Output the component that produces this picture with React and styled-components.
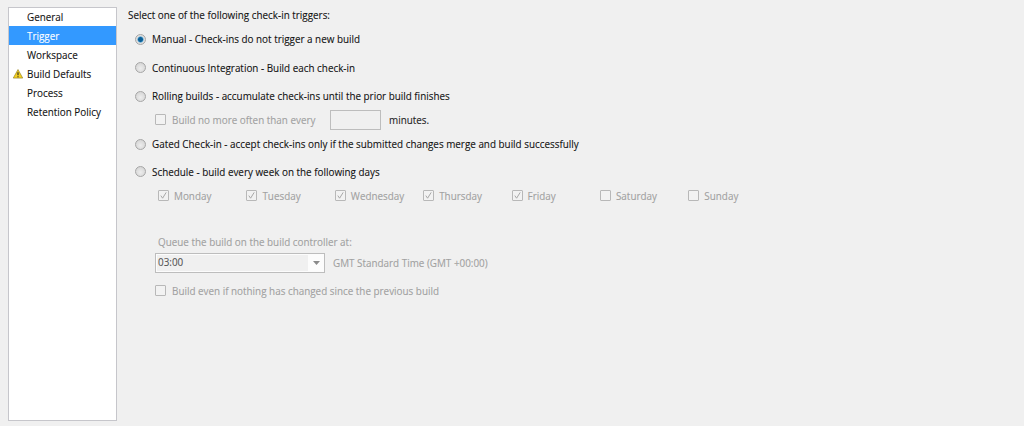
import React from "react";
import styled, { createGlobalStyle } from "styled-components";

const Global = createGlobalStyle`
  html, body { margin: 0; padding: 0; background: #f0f0f0; }
  body { font-family: "Open Sans", "Noto Sans", sans-serif; font-size: 9.9px; color: #111; -webkit-text-stroke: 0.1px currentColor; }
`;
const Page = styled.div`
  width: 1024px; height: 426px; display: flex; box-sizing: border-box;
  padding: 7px 0 5px 8px; overflow: hidden;
`;
const Sidebar = styled.nav`
  width: 109px; box-sizing: border-box; background: #fff;
  border: 1px solid #c6c6cb; flex: none;
`;
const NavRow = styled.div`
  height: 19px; display: flex; align-items: center; padding-left: 18px; position: relative;
  background: ${p => (p.$active ? "#3399ff" : "transparent")};
  color: ${p => (p.$active ? "#fff" : "#111")};
  &:first-child { height: 18px; }
`;
const WarnIcon = styled.svg`
  position: absolute; left: 4px; top: 5px; width: 10px; height: 10px;
`;
const Main = styled.main`
  flex: 1; padding-left: 11px; display: flex; flex-direction: column;
`;
const Heading = styled.div`height: 16px; line-height: 16px; margin-bottom: 8px;`;
const RadioRow = styled.label`
  display: flex; align-items: center; gap: 6px; height: 16px; padding-left: 7px;
  margin-bottom: ${p => p.$mb ?? 12.6}px;
`;
const RadioDot = styled.span`
  width: 11px; height: 11px; border-radius: 50%; box-sizing: border-box; flex: none;
  border: 1px solid #a6a6a6;
  background: ${p => p.$on
    ? "radial-gradient(circle, #0d5f96 0 2px, #5fabd8 2.8px, #dcdcdc 3.4px, #ececec 100%)"
    : "radial-gradient(circle at 50% 60%, #ededed, #cfcfcf)"};
`;
const Check = styled.span`
  width: 11px; height: 11px; box-sizing: border-box; flex: none;
  border: 1px solid #b8b8b8; border-radius: 1px; background: #f2f2f2;
  display: flex; align-items: center; justify-content: center;
`;
const SubRow = styled.div`
  display: flex; align-items: center; height: 20px; padding-left: 27px;
  margin-bottom: ${p => p.$mb ?? 6}px;
`;
const Muted = styled.span`color: #a0a0a0; margin-left: ${p => p.$ml ?? 6}px; white-space: nowrap;`;
const Minutes = styled.span`margin-left: 8px; color: #222;`;
const SmallInput = styled.span`
  width: 51px; height: 20px; box-sizing: border-box;
  border: 1px solid #bdbdbd; background: #f0f0f0; flex: none;
`;
const EveryLabel = styled(Muted)`width: 158px; flex: none;`;
const Days = styled.div`
  display: flex; height: 16px; padding-left: 30px; margin-bottom: 30px; margin-top: 8px;
`;
const Day = styled.div`
  width: 88.4px; flex: none; display: flex; align-items: center;
`;
const QueueLabel = styled.div`
  height: 16px; line-height: 16px; color: #a0a0a0; padding-left: 30px; margin-bottom: 3px;
`;
const ComboRow = styled.div`
  display: flex; align-items: center; padding-left: 27px; height: 20px; margin-bottom: 8px;
`;
const Combo = styled.div`
  width: 170px; height: 20px; box-sizing: border-box; border: 1px solid #bdbdbd; background: #fcfcfc;
  display: flex; align-items: stretch; padding: 1px 0 1px 1px; flex: none;
`;
const ComboValue = styled.div`
  width: 151px; background: #f0f0f0; line-height: 15px; padding-left: 1px; color: #555; box-sizing: border-box;
`;
const Caret = styled.div`
  flex: 1; display: flex; align-items: center; justify-content: center;
`;
const TimeZone = styled.span`color: #a0a0a0; margin-left: 8px;`;

const Tick = () => (
  <svg width="9" height="9" viewBox="0 0 9 9"><path d="M1.8 4.6 L3.6 7.2 L7.2 1.4" fill="none" stroke="#a8a8a8" strokeWidth="1" /></svg>
);
const days = [["Monday",1],["Tuesday",1],["Wednesday",1],["Thursday",1],["Friday",1],["Saturday",0],["Sunday",0]];

export default function App() {
  return (
    <Page>
      <Global />
      <Sidebar>
        <NavRow>General</NavRow>
        <NavRow $active>Trigger</NavRow>
        <NavRow>Workspace</NavRow>
        <NavRow>
          <WarnIcon viewBox="0 0 11 11">
            <path d="M5.5 .6 L10.7 10 H.3 Z" fill="#f5d020" stroke="#8a7a20" strokeWidth=".7" strokeLinejoin="round" />
            <path d="M5.5 3.5 V7" stroke="#222" strokeWidth="1.2" />
            <path d="M5.5 7.9 V9" stroke="#222" strokeWidth="1.2" />
          </WarnIcon>
          Build Defaults
        </NavRow>
        <NavRow>Process</NavRow>
        <NavRow>Retention Policy</NavRow>
      </Sidebar>
      <Main>
        <Heading>Select one of the following check-in triggers:</Heading>
        <RadioRow><RadioDot $on />Manual - Check-ins do not trigger a new build</RadioRow>
        <RadioRow><RadioDot />Continuous Integration - Build each check-in</RadioRow>
        <RadioRow $mb={5.5}><RadioDot />Rolling builds - accumulate check-ins until the prior build finishes</RadioRow>
        <SubRow $mb={6.5}>
          <Check /><EveryLabel>Build no more often than every</EveryLabel>
          <SmallInput /><Minutes>minutes.</Minutes>
        </SubRow>
        <RadioRow $mb={11.6}><RadioDot />Gated Check-in - accept check-ins only if the submitted changes merge and build successfully</RadioRow>
        <RadioRow $mb={0}><RadioDot />Schedule - build every week on the following days</RadioRow>
        <Days>
          {days.map(([d, on]) => (
            <Day key={d}><Check>{on ? <Tick /> : null}</Check><Muted $ml={5}>{d}</Muted></Day>
          ))}
        </Days>
        <QueueLabel>Queue the build on the build controller at:</QueueLabel>
        <ComboRow>
          <Combo>
            <ComboValue>03:00</ComboValue>
            <Caret><svg width="7" height="4" viewBox="0 0 7 4"><path d="M0 0H7L3.5 4Z" fill="#8a8a8a" /></svg></Caret>
          </Combo>
          <TimeZone>GMT Standard Time (GMT +00:00)</TimeZone>
        </ComboRow>
        <SubRow $mb={0}><Check /><Muted>Build even if nothing has changed since the previous build</Muted></SubRow>
      </Main>
    </Page>
  );
}
